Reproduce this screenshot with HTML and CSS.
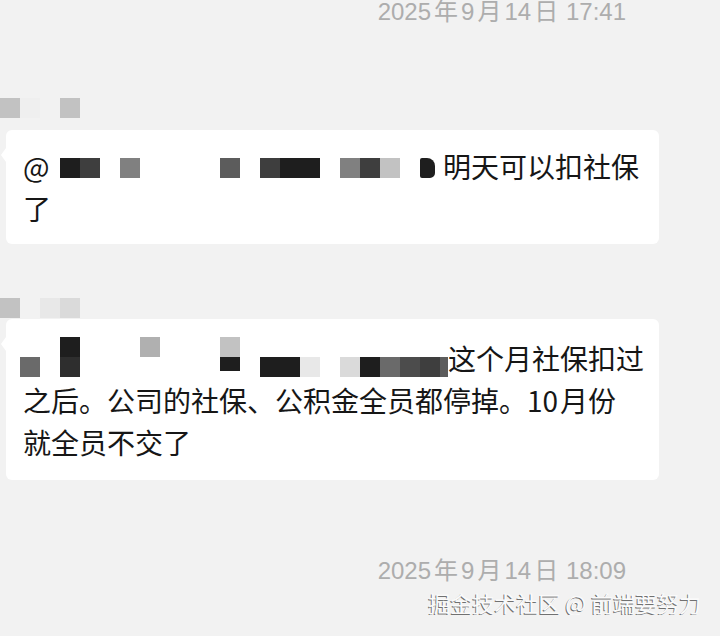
FILE: index.html
```html
<!DOCTYPE html>
<html lang="zh-CN">
<head>
    <meta charset="UTF-8">
    <meta name="viewport" content="width=device-width, initial-scale=1.0">
    <title>聊天记录</title>
    <link rel="stylesheet" href="styles.css">
</head>
<body>
    <!-- 时间 -->
    <div class="time">2025<span class="cn">年</span>9<span class="cn">月</span>14<span class="cn">日</span>&#8201;17:41</div>

    <!-- 第一条消息 -->
    <div class="nick nick-one">
        <i class="cell s9"></i><i class="cell s12"></i><i class="cell"></i><i class="cell s9"></i>
    </div>
    <div class="bubble bubble-one">
        <span class="at">@</span><span class="mosaic mosaic-one"><span class="grid grid-one"><i class="s1"></i><i class="s3"></i><i></i><i class="s7"></i><i></i><i></i><i></i><i></i><i class="s5"></i><i></i><i class="s3"></i><i class="s1"></i><i class="s1"></i><i></i><i class="s7"></i><i class="s3"></i><i class="s9"></i><i></i><i class="s1 tip"></i></span></span>明天可以扣社保<br>了
    </div>

    <!-- 第二条消息 -->
    <div class="nick nick-two">
        <i class="cell s9"></i><i class="cell"></i><i class="cell s11"></i><i class="cell s10"></i>
    </div>
    <div class="bubble bubble-two">
        <span class="mosaic mosaic-two"><span class="grid grid-two"><i></i><i></i><i class="s1"></i><i></i><i></i><i></i><i class="s8"></i><i></i><i></i><i></i><i class="s9"></i><i></i><i></i><i></i><i></i><i></i><i></i><i></i><i></i><i></i><i></i><i></i><i class="s6"></i><i></i><i class="s2"></i><i></i><i></i><i></i><i></i><i></i><i></i><i></i><i class="s1 short"></i><i></i><i class="s1"></i><i class="s1"></i><i class="s11"></i><i></i><i class="s10"></i><i class="s1"></i><i class="s6"></i><i class="s4"></i><i class="s3"></i><i class="s5"></i></span></span>这个月社保扣过<br>之后。公司的社保、公积金全员都停掉。<span class="num">10</span>月份<br>就全员不交了
    </div>

    <!-- 时间 -->
    <div class="time time-bottom">2025<span class="cn">年</span>9<span class="cn">月</span>14<span class="cn">日</span>&#8201;18:09</div>

    <!-- 水印 -->
    <div class="mark">掘金技术社区 @ 前端要努力</div>
</body>
</html>
```

FILE: styles.css
```css
/* 页面整体 */
body {
    margin: 0;
    background-color: #f2f2f2;
    font-family: "Noto Sans CJK SC", sans-serif;
    color: #161616;
}

/* 时间 */
.time {
    font-family: "Liberation Sans", "Noto Sans CJK SC", sans-serif;
    font-size: 24px;
    line-height: 24px;
    color: #adadad;
    text-align: right;
    padding-right: 94px;
}

.time .cn {
    margin: 0 3px;
}

.time-bottom {
    margin-top: 79px;
}

/* 打码的昵称 */
.nick {
    display: flex;
    height: 20px;
}

.nick-one {
    margin-top: 74px;
}

.nick-two {
    margin-top: 54px;
}

.cell {
    display: block;
    width: 20px;
    height: 20px;
}

/* 消息气泡 */
.bubble {
    position: relative;
    box-sizing: border-box;
    width: 653px;
    margin-left: 6px;
    padding: 15px 14px 15px 17px;
    background-color: #fff;
    border-radius: 6px;
    font-size: 28px;
    line-height: 42px;
}

.bubble::before {
    content: "";
    position: absolute;
    left: -5px;
    top: 18px;
    border-top: 7px solid transparent;
    border-bottom: 7px solid transparent;
    border-right: 5px solid #fff;
}

.bubble-one {
    margin-top: 12px;
}

.bubble-two {
    margin-top: 1px;
    padding-top: 18px;
    padding-bottom: 17px;
}

.at {
    display: inline-block;
    width: 37px;
}

.num {
    margin: 0 2px 0 0;
}

/* 马赛克 */
.mosaic {
    display: inline-block;
    overflow: hidden;
}

.mosaic-one {
    width: 383px;
    height: 20px;
}

.mosaic-two {
    width: 428px;
    height: 40px;
    margin-left: -3px;
    vertical-align: -7px;
}

.grid {
    display: grid;
    grid-auto-rows: 20px;
}

.grid-one {
    grid-template-columns: repeat(18, 20px) 15px;
}

.grid-two {
    grid-template-columns: repeat(21, 20px) 8px;
}

.grid i {
    display: block;
}

.grid .short {
    height: 14px;
}

.grid .tip {
    border-radius: 2px 8px 5px 2px;
}

.s1 { background-color: #1e1e1e; }
.s2 { background-color: #2e2e2e; }
.s3 { background-color: #3e3e3e; }
.s4 { background-color: #4c4c4c; }
.s5 { background-color: #5c5c5c; }
.s6 { background-color: #6a6a6a; }
.s7 { background-color: #808080; }
.s8 { background-color: #b0b0b0; }
.s9 { background-color: #c2c2c2; }
.s10 { background-color: #dadada; }
.s11 { background-color: #e8e8e8; }
.s12 { background-color: #efefef; }

/* 水印 */
.mark {
    margin-top: 6px;
    padding-right: 19px;
    text-align: right;
    font-size: 22px;
    line-height: 26px;
    color: #fafafa;
    text-shadow: -1px 1px 0 rgba(0, 0, 0, 0.55);
}
```
